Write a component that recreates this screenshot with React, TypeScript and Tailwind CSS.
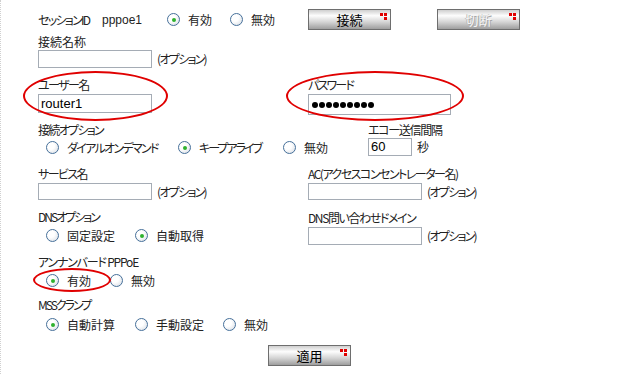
import React from "react";

function Radio({ checked, label, className, textClass }: { checked?: boolean; label: string; className?: string; textClass?: string }) {
  return (
    <div className={"flex items-center " + (className ?? "")}>
      <span className="flex h-[13px] w-[13px] shrink-0 items-center justify-center rounded-full border border-[#46709a] bg-[radial-gradient(circle_at_35%_35%,#ffffff_35%,#d3d9e1_100%)]">
        {checked && <span className="h-[4px] w-[4px] rounded-full bg-[#2fb12f]" />}
      </span>
      <span className={"ml-[8px] whitespace-nowrap " + (textClass ?? "")}>{label}</span>
    </div>
  );
}

function Btn({ label, disabled }: { label: string; disabled?: boolean }) {
  return (
    <div className="relative flex h-[21px] w-[83px] shrink-0 items-center justify-center border border-[#6e6e6e] bg-[linear-gradient(to_bottom,#cfcfcf_0%,#fdfdfd_30%,#d2d2d2_65%,#9e9e9e_100%)]">
      <span
        className={
          disabled
            ? "text-[13px] leading-[15px] text-[#f4f4f4] [text-shadow:1px_1px_0_#a8a8a8,-1px_0_0_#b8b8b8]"
            : "text-[13px] leading-[15px] text-black"
        }
      >
        {label}
      </span>
      <span className="absolute right-[3px] top-[3px] h-[7px] w-[7px]">
        <span className="absolute left-0 top-0 h-[3px] w-[3px] bg-[#e00000]" />
        <span className="absolute left-[4px] top-0 h-[3px] w-[3px] bg-[#e00000]" />
        <span className="absolute left-[4px] top-[4px] h-[3px] w-[3px] bg-[#e00000]" />
      </span>
    </div>
  );
}

function Box({ className, children }: { className: string; children?: React.ReactNode }) {
  return (
    <div className={"flex items-center border border-[#a5acb5] bg-white pl-[2px] text-[13px] text-black " + className}>
      {children}
    </div>
  );
}

const Opt = () => <span className="ml-[5px] whitespace-nowrap tracking-[-1.7px]">(オプション)</span>;

export default function App() {
  return (
    <div className="relative h-[374px] w-[627px] overflow-hidden border-l border-dotted border-[#d0d0d0] bg-white pl-[37px] pt-[9px] font-['Noto_Sans_CJK_JP','Noto_Sans',sans-serif] text-[12px] leading-[14px] text-[#222] [font-feature-settings:'palt']">
      {/* Row 1 */}
      <div className="flex h-[21px] items-center">
        <span className="w-[64px] whitespace-nowrap tracking-[-1.7px]">セッションID</span>
        <span className="w-[65px] font-['Liberation_Sans',sans-serif]">pppoe1</span>
        <Radio checked label="有効" className="w-[63px]" />
        <Radio label="無効" className="w-[78px]" />
        <Btn label="接続" />
        <div className="w-[46px]" />
        <Btn label="切断" disabled />
      </div>

      {/* 接続名称 */}
      <div className="mt-[5px]">
        <div className="h-[14px]">接続名称</div>
        <div className="mt-[1px] flex items-center">
          <Box className="h-[18px] w-[114px]" />
          <Opt />
        </div>
      </div>

      {/* user / password */}
      <div className="mt-[10px] grid grid-cols-[270px_1fr] items-start">
        <div>
          <div className="h-[14px] tracking-[-1.6px]">ユーザー名</div>
          <Box className="mt-[2px] h-[19px] w-[114px] font-['Liberation_Sans',sans-serif]">router1</Box>
        </div>
        <div>
          <div className="h-[14px] tracking-[-1.8px]">パスワード</div>
          <Box className="mt-[2px] h-[21px] w-[143px]">
            <span className="flex gap-[1px] pl-[1px]">
              {Array.from({ length: 9 }).map((_, i) => (
                <span key={i} className="h-[6px] w-[6px] rounded-full bg-black" />
              ))}
            </span>
          </Box>
        </div>
      </div>

      {/* 接続オプション */}
      <div className="mt-[8px] flex items-start">
        <div className="w-[330px]">
          <div className="h-[14px] tracking-[-1.7px]">接続オプション</div>
          <div className="mt-[3px] flex h-[15px] items-center pl-[8px]">
            <Radio label="ダイアルオンデマンド" className="w-[132px]" textClass="tracking-[-1.7px]" />
            <Radio checked label="キープアライブ" className="w-[105px]" textClass="tracking-[-2px]" />
            <Radio label="無効" />
          </div>
        </div>
        <div>
          <div className="h-[14px] tracking-[-1.3px]">エコー送信間隔</div>
          <div className="mt-[1px] flex items-center">
            <Box className="h-[18px] w-[44px] font-['Liberation_Sans',sans-serif]">60</Box>
            <span className="ml-[5px]">秒</span>
          </div>
        </div>
      </div>

      {/* サービス名 / AC */}
      <div className="mt-[11px] grid grid-cols-[270px_1fr] items-start">
        <div>
          <div className="h-[14px] tracking-[-1.6px]">サービス名</div>
          <div className="mt-[2px] flex items-center">
            <Box className="h-[17px] w-[114px]" />
            <Opt />
          </div>
        </div>
        <div>
          <div className="h-[14px] whitespace-nowrap tracking-[-1.5px]">AC(アクセスコンセントレーター名)</div>
          <div className="mt-[2px] flex items-center">
            <Box className="h-[17px] w-[114px]" />
            <Opt />
          </div>
        </div>
      </div>

      {/* DNS */}
      <div className="mt-[10px] grid grid-cols-[270px_1fr] items-start">
        <div>
          <div className="h-[14px] tracking-[-2px]">DNSオプション</div>
          <div className="mt-[4px] flex h-[15px] items-center pl-[8px]">
            <Radio label="固定設定" className="w-[89px]" />
            <Radio checked label="自動取得" />
          </div>
        </div>
        <div className="pt-[1px]">
          <div className="h-[14px] tracking-[-1.4px]">DNS問い合わせドメイン</div>
          <div className="mt-[2px] flex items-center">
            <Box className="h-[18px] w-[114px]" />
            <Opt />
          </div>
        </div>
      </div>

      {/* アンナンバード */}
      <div className="mt-[10px]">
        <div className="h-[14px] tracking-[-1.2px]">アンナンバード PPPoE</div>
        <div className="mt-[4px] flex h-[15px] items-center pl-[8px]">
          <Radio checked label="有効" className="w-[64px]" />
          <Radio label="無効" />
        </div>
      </div>

      {/* MSS */}
      <div className="mt-[10px]">
        <div className="h-[14px] tracking-[-2px]">MSSクランプ</div>
        <div className="mt-[5px] flex h-[15px] items-center pl-[8px]">
          <Radio checked label="自動計算" className="w-[89px]" />
          <Radio label="手動設定" className="w-[88px]" />
          <Radio label="無効" />
        </div>
      </div>

      <div className="mt-[13px] pl-[230px]">
        <Btn label="適用" />
      </div>

      {/* red highlight ellipses */}
      <div className="pointer-events-none absolute left-[22px] top-[71px] h-[50px] w-[145px] rounded-[50%] border-2 border-[#e00000]" />
      <div className="pointer-events-none absolute left-[285px] top-[71px] h-[50px] w-[178px] rounded-[50%] border-2 border-[#e00000]" />
      <div className="pointer-events-none absolute left-[32px] top-[268px] h-[24px] w-[78px] rounded-[50%] border-2 border-[#e00000]" />
    </div>
  );
}
